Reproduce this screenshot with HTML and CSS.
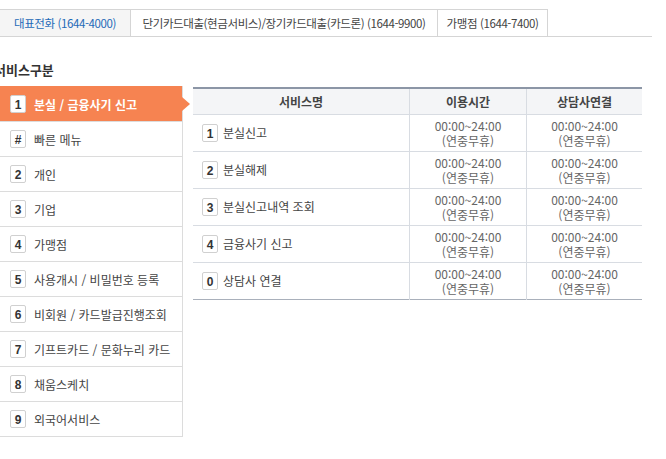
FILE: index.html
```html
<!DOCTYPE html>
<html lang="ko">
<head>
  <meta charset="UTF-8" />
  <meta name="viewport" content="width=device-width, initial-scale=1.0"/>
  <title>ARS 서비스 안내</title>
  <link rel="stylesheet" href="styles.css">
</head>
<body>
  <div class="tabs">
    <div class="tab active">대표전화 (1644-4000)</div>
    <div class="tab">단기카드대출(현금서비스)/장기카드대출(카드론) (1644-9900)</div>
    <div class="tab">가맹점 (1644-7400)</div>
  </div>

  <div class="service">
    <h2>서비스구분</h2>
    <div class="service-body">
      <ul class="menu">
        <li class="on"><span class="num">1</span>분실 / 금융사기 신고</li>
        <li><span class="num">#</span>빠른 메뉴</li>
        <li><span class="num">2</span>개인</li>
        <li><span class="num">3</span>기업</li>
        <li><span class="num">4</span>가맹점</li>
        <li><span class="num">5</span>사용개시 / 비밀번호 등록</li>
        <li><span class="num">6</span>비회원 / 카드발급진행조회</li>
        <li><span class="num">7</span>기프트카드 / 문화누리 카드</li>
        <li><span class="num">8</span>채움스케치</li>
        <li><span class="num">9</span>외국어서비스</li>
      </ul>

      <table class="svc-table">
        <thead>
          <tr>
            <th class="col-name">서비스명</th>
            <th class="col-time">이용시간</th>
            <th>상담사연결</th>
          </tr>
        </thead>
        <tbody>
          <tr>
            <td class="name"><span class="num">1</span>분실신고</td>
            <td>00:00~24:00<br>(연중무휴)</td>
            <td>00:00~24:00<br>(연중무휴)</td>
          </tr>
          <tr>
            <td class="name"><span class="num">2</span>분실해제</td>
            <td>00:00~24:00<br>(연중무휴)</td>
            <td>00:00~24:00<br>(연중무휴)</td>
          </tr>
          <tr>
            <td class="name"><span class="num">3</span>분실신고내역 조회</td>
            <td>00:00~24:00<br>(연중무휴)</td>
            <td>00:00~24:00<br>(연중무휴)</td>
          </tr>
          <tr>
            <td class="name"><span class="num">4</span>금융사기 신고</td>
            <td>00:00~24:00<br>(연중무휴)</td>
            <td>00:00~24:00<br>(연중무휴)</td>
          </tr>
          <tr>
            <td class="name"><span class="num">0</span>상담사 연결</td>
            <td>00:00~24:00<br>(연중무휴)</td>
            <td>00:00~24:00<br>(연중무휴)</td>
          </tr>
        </tbody>
      </table>
    </div>
  </div>
</body>
</html>
```

FILE: styles.css
```css
body {
  margin: 0;
  background: #fff;
  font-family: "Noto Sans CJK KR", "Noto Sans", sans-serif;
  font-size: 12px;
  color: #333;
}

.tabs {
  display: flex;
  width: 652px;
  margin-top: 9px;
  border-bottom: 1px solid #d5d5d5;
}

.tab {
  height: 27px;
  line-height: 27px;
  box-sizing: border-box;
  border-top: 1px solid #d5d5d5;
  border-right: 1px solid #d5d5d5;
  text-align: center;
  font-size: 11.5px;
  letter-spacing: -0.4px;
  color: #444;
  white-space: nowrap;
}

.tab:nth-child(1) {
  width: 131px;
}

.tab:nth-child(2) {
  width: 307px;
}

.tab:nth-child(3) {
  width: 110px;
}

.tab.active {
  background: #f5f5f5;
  color: #1f6bb8;
}

.service {
  margin-left: -6px;
}

.service h2 {
  margin: 25px 0 8px;
  height: 16px;
  line-height: 16px;
  font-size: 13px;
  font-weight: bold;
  color: #333;
}

.service-body {
  display: flex;
  align-items: flex-start;
  gap: 10px;
}

.menu {
  list-style: none;
  margin: 0;
  padding: 0;
  width: 188px;
  border-right: 1px solid #dcdcdc;
  border-bottom: 1px solid #dcdcdc;
}

.menu li {
  position: relative;
  display: flex;
  align-items: center;
  height: 34px;
  padding-left: 16px;
  border-top: 1px solid #dcdcdc;
  font-size: 12px;
  color: #444;
}

.menu li.on {
  background: #f68351;
  border-top-color: #f68351;
  color: #fff;
  font-weight: bold;
}

.menu li.on::after {
  content: "";
  position: absolute;
  right: -8px;
  top: 10px;
  border-left: 8px solid #f68351;
  border-top: 7px solid transparent;
  border-bottom: 7px solid transparent;
}

.num {
  display: inline-block;
  width: 16px;
  height: 18px;
  line-height: 18px;
  margin-right: 8px;
  border: 1px solid #d0d0d0;
  border-radius: 2px;
  background: #fff;
  text-align: center;
  font-family: "Liberation Sans", sans-serif;
  font-size: 12px;
  font-weight: bold;
  color: #333;
  box-sizing: border-box;
}

.svc-table {
  width: 449px;
  margin-top: 1px;
  border-collapse: collapse;
  border-top: 2px solid #8c96a6;
  border-bottom: 1px solid #a9b0bb;
}

.svc-table th {
  height: 25px;
  padding: 0;
  background: #f4f5f7;
  border-bottom: 1px solid #d8dce2;
  border-left: 1px solid #d8dce2;
  font-size: 12px;
  font-weight: bold;
  color: #444;
}

.svc-table th:first-child,
.svc-table td:first-child {
  border-left: none;
}

.svc-table th.col-name {
  width: 216px;
}

.svc-table th.col-time {
  width: 116px;
}

.svc-table td {
  height: 36px;
  padding: 0;
  border-top: 1px solid #d8dce2;
  border-left: 1px solid #d8dce2;
  text-align: center;
  line-height: 15px;
  color: #666;
}

.svc-table td.name {
  padding-left: 9px;
  text-align: left;
  color: #444;
}

.svc-table td.name .num {
  margin-right: 5px;
}
```
